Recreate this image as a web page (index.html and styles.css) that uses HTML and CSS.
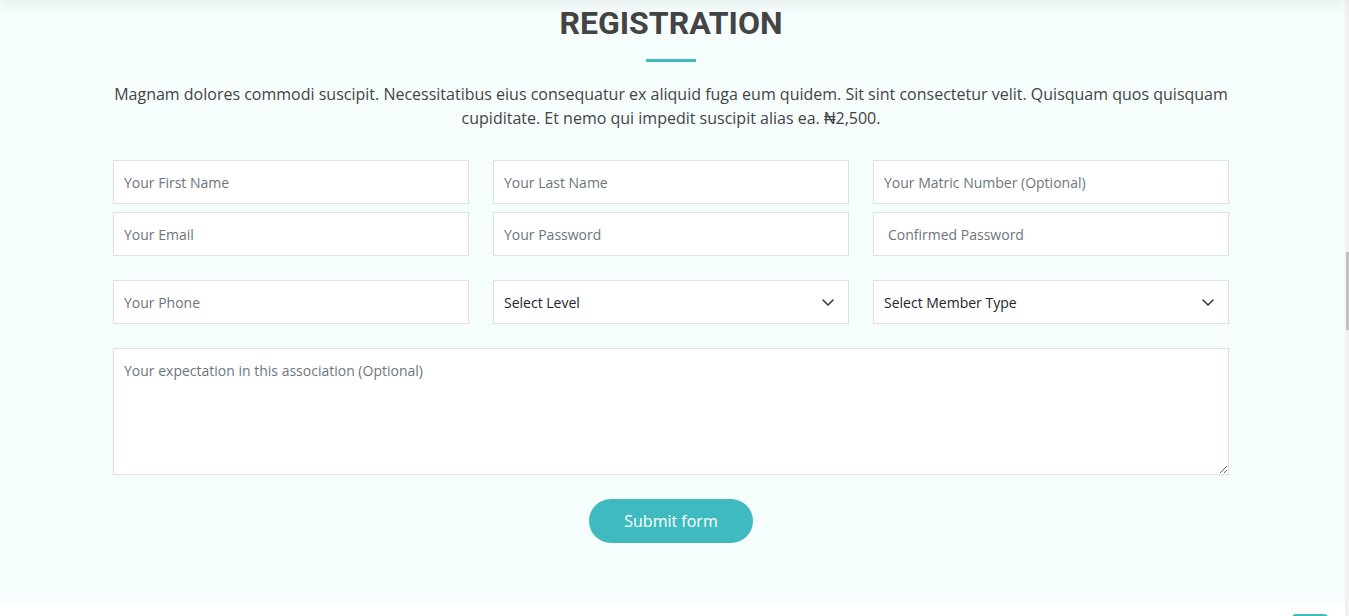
FILE: index.html
```html
<!DOCTYPE html>
<html lang="en">
<head>
<meta charset="utf-8">
<title>Registration</title>
<link rel="stylesheet" href="styles.css">
</head>
<body>
<div class="topbar"></div>
<main class="page">
  <section class="register">
    <div class="container">
      <div class="section-title">
        <h2>Registration</h2>
        <p>Magnam dolores commodi suscipit. Necessitatibus eius consequatur ex aliquid fuga eum quidem. Sit sint consectetur velit. Quisquam quos quisquam cupiditate. Et nemo qui impedit suscipit alias ea. ₦2,500.</p>
      </div>
      <form class="reg-form">
        <div class="grid grid-tight">
          <input class="field" type="text" placeholder="Your First Name">
          <input class="field" type="text" placeholder="Your Last Name">
          <input class="field" type="text" placeholder="Your Matric Number (Optional)">
          <input class="field" type="email" placeholder="Your Email">
          <input class="field" type="password" placeholder="Your Password">
          <input class="field field-indent" type="password" placeholder="Confirmed Password">
        </div>
        <div class="grid">
          <input class="field" type="text" placeholder="Your Phone">
          <div class="select-wrap">
            <select class="field select">
              <option>Select Level</option>
            </select>
            <svg class="chev" width="16" height="16" viewBox="0 0 16 16"><path d="M3 6l5 5 5-5" fill="none" stroke="#343a40" stroke-width="1.6" stroke-linecap="round" stroke-linejoin="round"/></svg>
          </div>
          <div class="select-wrap">
            <select class="field select">
              <option>Select Member Type</option>
            </select>
            <svg class="chev" width="16" height="16" viewBox="0 0 16 16"><path d="M3 6l5 5 5-5" fill="none" stroke="#343a40" stroke-width="1.6" stroke-linecap="round" stroke-linejoin="round"/></svg>
          </div>
        </div>
        <textarea class="field area" placeholder="Your expectation in this association (Optional)"></textarea>
        <div class="actions">
          <button class="submit" type="button">Submit form</button>
        </div>
      </form>
    </div>
  </section>
</main>
<div class="scrollbar"><div class="thumb"></div></div>
<div class="back-top"></div>
</body>
</html>
```
FILE: styles.css
```css
html, body {
  margin: 0;
  padding: 0;
  background: #fff;
  overflow: hidden;
}
body {
  font-family: "Open Sans", "Liberation Sans", sans-serif;
  color: #444;
  height: 616px;
}
.topbar {
  position: fixed;
  top: -60px;
  left: 0;
  width: 1345px;
  height: 60px;
  background: #fff;
  box-shadow: 0 2px 16px rgba(0, 0, 0, 0.09);
  z-index: 5;
}
.page {
  width: 1345px;
}
.register {
  background: #f6fdfd;
  padding: 4px 0 60px;
  height: 539px;
}
.container {
  width: 1116px;
  margin-left: 113px;
}
.section-title {
  text-align: center;
  margin-bottom: 30px;
}
.section-title h2 {
  font-family: Roboto, "Liberation Sans", sans-serif;
  font-size: 32px;
  font-weight: 700;
  text-transform: uppercase;
  color: #444;
  line-height: 1.2;
  margin: 0 0 20px;
  padding-bottom: 20px;
  position: relative;
}
.section-title h2::after {
  content: "";
  position: absolute;
  width: 50px;
  height: 3px;
  background: #3fbbc0;
  bottom: 0;
  left: calc(50% - 25px);
}
.section-title p {
  margin: 0;
  font-size: 16px;
  line-height: 24px;
}
.reg-form {
  display: flex;
  flex-direction: column;
  gap: 24px;
}
.grid {
  display: grid;
  grid-template-columns: repeat(3, 1fr);
  column-gap: 24px;
  row-gap: 8px;
}
.field {
  box-sizing: border-box;
  width: 100%;
  height: 44px;
  padding: 10px;
  border: 1px solid #dee2e6;
  border-radius: 0;
  background: #fff;
  font-family: "Open Sans", "Liberation Sans", sans-serif;
  font-size: 14px;
  color: #212529;
  outline: none;
  margin: 0;
}
.field::placeholder {
  color: #6c757d;
  opacity: 1;
}
.field-indent {
  padding-left: 14px;
}
.select-wrap {
  position: relative;
}
.select {
  appearance: none;
  -webkit-appearance: none;
  padding-right: 36px;
}
.chev {
  position: absolute;
  right: 13px;
  top: 14px;
  pointer-events: none;
}
.area {
  height: 127px;
  padding-top: 11px;
  line-height: 1.5;
  resize: vertical;
  display: block;
}
.actions {
  display: flex;
  justify-content: center;
}
.submit {
  background: #3fbbc0;
  border: 0;
  border-radius: 50px;
  color: #fff;
  padding: 0 35px;
  height: 44px;
  font-family: "Open Sans", "Liberation Sans", sans-serif;
  font-size: 16px;
  cursor: pointer;
}
.scrollbar {
  position: fixed;
  top: 0;
  right: 0;
  width: 4px;
  height: 616px;
  background: #f1f1f1;
}
.thumb {
  position: absolute;
  right: 0;
  top: 252px;
  width: 3px;
  height: 78px;
  background: #c1c1c1;
}
.back-top {
  position: fixed;
  left: 1292px;
  top: 614px;
  width: 36px;
  height: 40px;
  border-radius: 4px;
  background: #3fbbc0;
}
```
